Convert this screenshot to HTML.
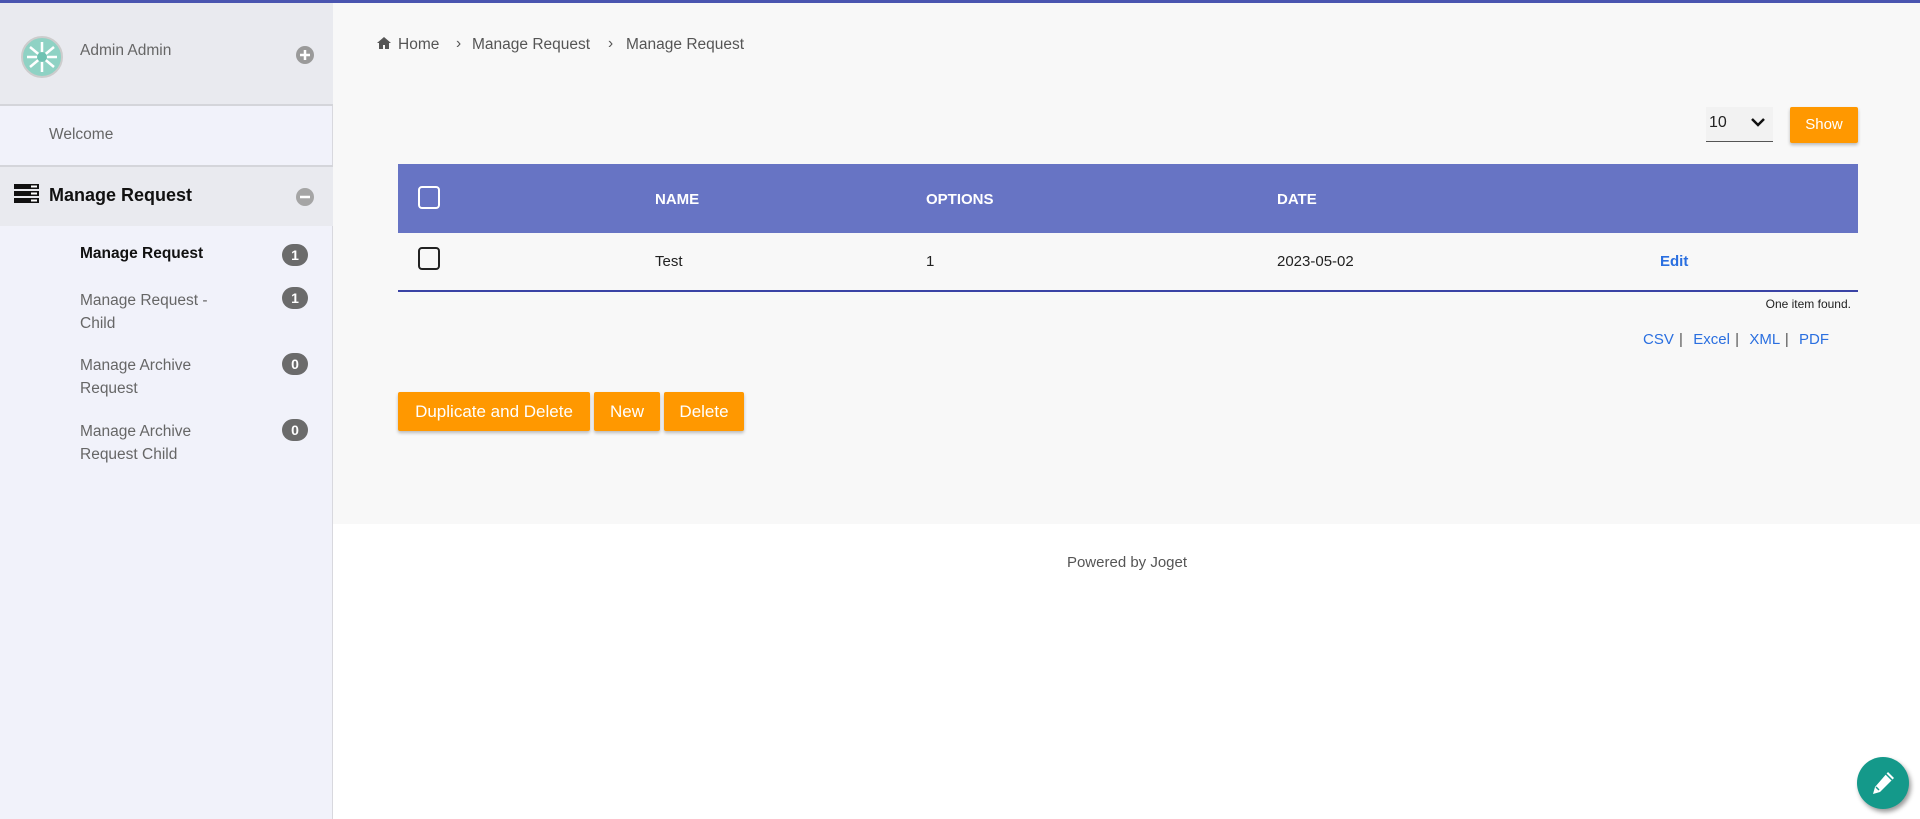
<!DOCTYPE html>
<html><head><meta charset="utf-8"><style>
*{box-sizing:border-box;margin:0;padding:0}
body{width:1920px;height:819px;overflow:hidden;font-family:"Liberation Sans",sans-serif;background:#fff;position:relative}
.abs{position:absolute}
.top{left:0;top:0;width:1920px;height:3px;background:#4a55b0}
.side{left:0;top:0;width:333px;height:819px;background:#f1f2fa;border-right:1px solid #d8d8de}
.sh{left:0;top:3px;width:333px;height:103px;background:#e9eaef;border-bottom:2px solid #d4d5da}
.mh{left:0;top:165px;width:333px;height:61px;background:#e9eaef;border-top:2px solid #d4d5da}
.t{white-space:nowrap}
.badge{width:26px;height:22px;border-radius:11px;background:#6b6b6b;color:#fff;font-weight:bold;font-size:14px;text-align:center;line-height:22px}
.sub{font-size:15.5px;color:#666;line-height:23px}
.main{left:333px;top:3px;width:1587px;height:521px;background:#f8f8f8}
.btn{background:#ff9800;color:#fff;font-size:17px;text-align:center;border-radius:2px;box-shadow:0 2px 3px rgba(0,0,0,.25)}
.th{color:#fff;font-weight:bold;font-size:15px}
.lnk{color:#2a6fe0;font-size:15px}
</style></head><body>
<div class="abs side"></div>
<div class="abs sh"></div>
<div class="abs mh"></div>
<div class="abs main"></div>
<div class="abs top"></div>

<svg class="abs" style="left:21px;top:36px" width="42" height="42" viewBox="0 0 42 42"><circle cx="21" cy="21" r="20" fill="#8fd2c4" stroke="#ccc" stroke-width="2"/><g stroke="#fff" stroke-width="2.5" fill="none"><path d="M9 11l24 20M33 11L9 31M21 6v30M6 21h30"/></g><circle cx="21" cy="21" r="5" fill="#6fc2b2"/></svg>
<div class="abs t" style="left:80px;top:42px;font-size:15.5px;color:#666">Admin Admin</div>
<svg class="abs" style="left:296px;top:46px" width="18" height="18"><circle cx="9" cy="9" r="9" fill="#9a9a9a"/><path d="M9 4v10M4 9h10" stroke="#fff" stroke-width="2.5"/></svg>
<div class="abs t" style="left:49px;top:126px;font-size:15.5px;color:#666">Welcome</div>

<svg class="abs" style="left:14px;top:184px" width="25" height="20"><rect y="0" width="25" height="5" fill="#111"/><rect y="7" width="25" height="5" fill="#111"/><rect y="14" width="25" height="5" fill="#111"/><rect x="17" y="1.5" width="6" height="2" fill="#fff"/><rect x="17" y="8.5" width="6" height="2" fill="#fff"/><rect x="17" y="15.5" width="6" height="2" fill="#fff"/></svg>
<div class="abs t" style="left:49px;top:185px;font-size:18px;font-weight:bold;color:#111">Manage Request</div>
<svg class="abs" style="left:296px;top:188px" width="18" height="18"><circle cx="9" cy="9" r="9" fill="#a5a5a5"/><path d="M4 9h10" stroke="#fff" stroke-width="2.5"/></svg>

<div class="abs t" style="left:80px;top:245px;font-size:15.5px;font-weight:bold;color:#111">Manage Request</div>
<div class="abs badge" style="left:282px;top:244px">1</div>
<div class="abs sub" style="left:80px;top:289px">Manage Request -<br>Child</div>
<div class="abs badge" style="left:282px;top:287px">1</div>
<div class="abs sub" style="left:80px;top:354px">Manage Archive<br>Request</div>
<div class="abs badge" style="left:282px;top:353px">0</div>
<div class="abs sub" style="left:80px;top:420px">Manage Archive<br>Request Child</div>
<div class="abs badge" style="left:282px;top:419px">0</div>

<svg class="abs" style="left:377px;top:37px" width="14" height="12" viewBox="0 0 14 12"><path d="M7 0L0 6h2v6h4V8h2v4h4V6h2z" fill="#555"/></svg>
<div class="abs t" style="left:398px;top:36px;font-size:15.5px;color:#555">Home</div>
<div class="abs t" style="left:456px;top:35px;font-size:15.5px;color:#555">›</div>
<div class="abs t" style="left:472px;top:36px;font-size:15.5px;color:#555">Manage Request</div>
<div class="abs t" style="left:608px;top:35px;font-size:15.5px;color:#555">›</div>
<div class="abs t" style="left:626px;top:36px;font-size:15.5px;color:#555">Manage Request</div>

<div class="abs" style="left:1706px;top:107px;width:67px;height:35px;background:#f2f2f2;border-bottom:1px solid #555"></div>
<div class="abs t" style="left:1709px;top:114px;font-size:16px;color:#222">10</div>
<svg class="abs" style="left:1751px;top:117px" width="14" height="10"><path d="M1 2l6 6 6-6" stroke="#111" stroke-width="2.5" fill="none"/></svg>
<div class="abs btn" style="left:1790px;top:107px;width:68px;height:36px;line-height:36px;font-size:15px">Show</div>

<div class="abs" style="left:398px;top:164px;width:1460px;height:69px;background:#6774c4"></div>
<div class="abs" style="left:418px;top:186px;width:22px;height:23px;border:2px solid #fff;border-radius:4px"></div>
<div class="abs th t" style="left:655px;top:191px">NAME</div>
<div class="abs th t" style="left:926px;top:191px">OPTIONS</div>
<div class="abs th t" style="left:1277px;top:191px">DATE</div>
<div class="abs" style="left:398px;top:290px;width:1460px;height:2px;background:#3a43a5"></div>
<div class="abs" style="left:418px;top:247px;width:22px;height:23px;border:2px solid #222;border-radius:4px"></div>
<div class="abs t" style="left:655px;top:253px;font-size:15px;color:#222">Test</div>
<div class="abs t" style="left:926px;top:253px;font-size:15px;color:#222">1</div>
<div class="abs t" style="left:1277px;top:253px;font-size:15px;color:#222">2023-05-02</div>
<div class="abs t" style="left:1660px;top:253px;font-size:15px;color:#2a6fe0;font-weight:bold">Edit</div>
<div class="abs t" style="right:69px;top:297px;font-size:12px;color:#222">One item found.</div>
<div class="abs t lnk" style="left:1643px;top:331px;word-spacing:1px">CSV <span style="color:#555">|</span>&nbsp;&nbsp;Excel <span style="color:#555">|</span>&nbsp;&nbsp;XML <span style="color:#555">|</span>&nbsp;&nbsp;PDF</div>

<div class="abs btn" style="left:398px;top:392px;width:192px;height:39px;line-height:39px">Duplicate and Delete</div>
<div class="abs btn" style="left:594px;top:392px;width:66px;height:39px;line-height:39px">New</div>
<div class="abs btn" style="left:664px;top:392px;width:80px;height:39px;line-height:39px">Delete</div>

<div class="abs t" style="left:0;width:2254px;text-align:center;top:554px;font-size:15px;color:#555">Powered by Joget</div>

<div class="abs" style="left:1857px;top:757px;width:52px;height:52px;border-radius:50%;background:#14998a;box-shadow:2px 3px 5px rgba(0,0,0,.4)"></div>
<svg class="abs" style="left:1869px;top:769px" width="28" height="28" viewBox="0 0 28 28"><path d="M19 3l6 6-14 14-7 2 2-7z" fill="#fff"/><path d="M17 5l6 6" stroke="#14998a" stroke-width="1.5"/><path d="M7 18l3 3" stroke="#14998a" stroke-width="1.5"/></svg>
</body></html>
